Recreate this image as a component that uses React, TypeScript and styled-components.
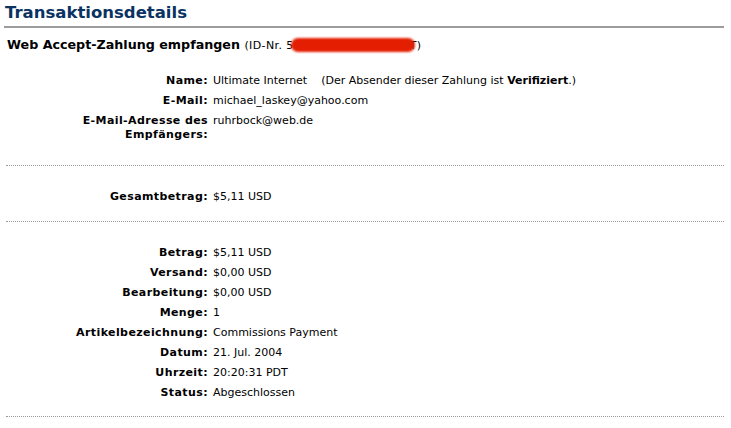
import styled, { createGlobalStyle } from "styled-components";

const GlobalStyle = createGlobalStyle`
  body {
    margin: 0;
    background: #ffffff;
    font-family: "DejaVu Sans", Verdana, sans-serif;
    font-size: 11px;
    color: #000000;
  }
`;

const Page = styled.div`
  width: 731px;
  height: 428px;
  padding: 0 7px 0 4px;
  box-sizing: border-box;
  overflow: hidden;
`;

const Title = styled.h1`
  margin: 0;
  padding: 3px 0 0 1px;
  height: 28px;
  box-sizing: border-box;
  font-size: 16.5px;
  font-weight: bold;
  color: #0a3363;
  border-bottom: 2px solid #9c9c9c;
`;

const Heading = styled.h2`
  margin: 0;
  padding: 9px 0 0 3px;
  font-size: 12.7px;
  font-weight: bold;
  line-height: 16px;
  color: #000000;
`;

const IdNote = styled.span`
  font-size: 11px;
  font-weight: normal;
  letter-spacing: 0.4px;
`;

const Redact = styled.span`
  display: inline-block;
  width: 124px;
  height: 14px;
  margin: 0 -5px 0 -3px;
  vertical-align: -3px;
  background: #e41e00;
  border-radius: 7px;
  filter: blur(1.2px);
`;

const Details = styled.div<{ $top: number; $bottom: number }>`
  display: grid;
  grid-template-columns: 204px 1fr;
  row-gap: 6px;
  padding: ${(p) => p.$top}px 0 ${(p) => p.$bottom}px;
  line-height: 14px;
`;

const Label = styled.div`
  text-align: right;
  font-weight: bold;
  letter-spacing: 0.4px;
  padding-left: 68px;
`;

const Value = styled.div`
  white-space: pre;
  padding-left: 5px;
`;

const Divider = styled.div`
  margin-left: 2px;
  border-top: 1px dotted #9a9a9a;
`;

type Row = [string, React.ReactNode];

const Rows = ({ rows, top, bottom }: { rows: Row[]; top: number; bottom: number }) => (
  <Details $top={top} $bottom={bottom}>
    {rows.map(([label, value]) => (
      <>
        <Label key={label}>{label}</Label>
        <Value>{value}</Value>
      </>
    ))}
  </Details>
);

const App = () => {
  const sender: Row[] = [
    [
      "Name:",
      <>
        Ultimate Internet{"    "}(Der Absender dieser Zahlung ist <b>Verifiziert</b>.)
      </>,
    ],
    ["E-Mail:", "michael_laskey@yahoo.com"],
    ["E-Mail-Adresse des Empfängers:", "ruhrbock@web.de"],
  ];

  const totals: Row[] = [["Gesamtbetrag:", "$5,11 USD"]];

  const items: Row[] = [
    ["Betrag:", "$5,11 USD"],
    ["Versand:", "$0,00 USD"],
    ["Bearbeitung:", "$0,00 USD"],
    ["Menge:", "1"],
    ["Artikelbezeichnung:", "Commissions Payment"],
    ["Datum:", "21. Jul. 2004"],
    ["Uhrzeit:", "20:20:31 PDT"],
    ["Status:", "Abgeschlossen"],
  ];

  return (
    <Page>
      <GlobalStyle />
      <Title>Transaktionsdetails</Title>
      <Heading>
        Web Accept-Zahlung empfangen{" "}
        <IdNote>
          (ID-Nr. 5<Redact />T)
        </IdNote>
      </Heading>
      <Rows rows={sender} top={20} bottom={23} />
      <Divider />
      <Rows rows={totals} top={24} bottom={17} />
      <Divider />
      <Rows rows={items} top={24} bottom={16} />
      <Divider />
    </Page>
  );
};

export default App;
